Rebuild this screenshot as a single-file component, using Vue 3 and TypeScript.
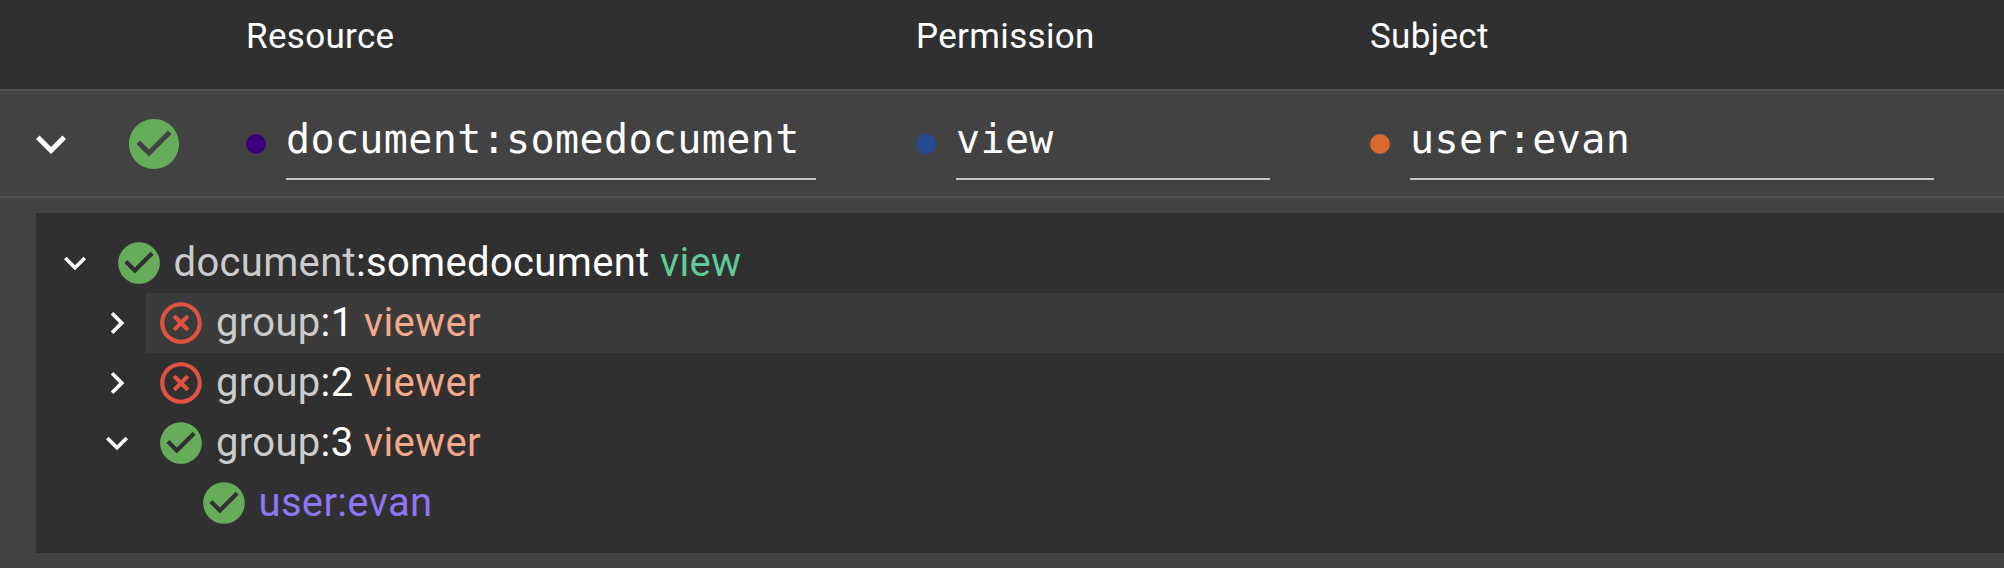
<script setup lang="ts">
import { defineComponent, h } from 'vue'

const paths = {
  check:
    'M12 2C6.48 2 2 6.48 2 12s4.48 10 10 10 10-4.48 10-10S17.52 2 12 2zm-2 15l-5-5 1.41-1.41L10 14.17l7.59-7.59L19 8l-9 9z',
  cross:
    'M14.59 8L12 10.59 9.41 8 8 9.41 10.59 12 8 14.59 9.41 16 12 13.41 14.59 16 16 14.59 13.41 12 16 9.41 14.59 8zM12 2C6.47 2 2 6.47 2 12s4.47 10 10 10 10-4.47 10-10S17.53 2 12 2zm0 18c-4.41 0-8-3.59-8-8s3.59-8 8-8 8 3.59 8 8-3.59 8-8 8z',
  down: 'M16.59 8.59L12 13.17 7.41 8.59 6 10l6 6 6-6z',
  right: 'M10 6L8.59 7.41 13.17 12l-4.58 4.59L10 18l6-6z',
}
type IconName = keyof typeof paths

const Icon = defineComponent({
  props: { name: { type: String, required: true } },
  setup: (props) => () =>
    h('svg', { viewBox: '0 0 24 24', fill: 'currentColor', 'aria-hidden': 'true' }, [
      h('path', { d: paths[props.name as IconName] }),
    ]),
})

interface Field {
  kind: string
  title: string
  value: string
}
const fields: Field[] = [
  { kind: 'resource', title: 'Resource', value: 'document:somedocument' },
  { kind: 'permission', title: 'Permission', value: 'view' },
  { kind: 'subject', title: 'Subject', value: 'user:evan' },
]

interface TreeRow {
  depth: number
  toggle?: IconName
  status: 'check' | 'cross'
  type?: string
  id?: string
  relation?: string
  relationKind?: 'permission' | 'relation'
  subject?: string
  active?: boolean
}
const rows: TreeRow[] = [
  { depth: 0, toggle: 'down', status: 'check', type: 'document', id: 'somedocument', relation: 'view', relationKind: 'permission' },
  { depth: 1, toggle: 'right', status: 'cross', type: 'group', id: '1', relation: 'viewer', relationKind: 'relation', active: true },
  { depth: 1, toggle: 'right', status: 'cross', type: 'group', id: '2', relation: 'viewer', relationKind: 'relation' },
  { depth: 1, toggle: 'down', status: 'check', type: 'group', id: '3', relation: 'viewer', relationKind: 'relation' },
  { depth: 2, status: 'check', subject: 'user:evan' },
]
</script>

<template>
  <main class="checks">
    <header class="grid head">
      <div v-for="f in fields" :key="f.kind" class="title" :class="`col-${f.kind}`">{{ f.title }}</div>
    </header>
    <section class="grid query">
      <Icon name="down" class="expand" />
      <Icon name="check" class="result" />
      <div v-for="f in fields" :key="f.kind" class="field" :class="`col-${f.kind}`">
        <span class="dot" :class="f.kind"></span>
        <span class="value">{{ f.value }}</span>
      </div>
    </section>
    <section class="trace">
      <div class="tree">
        <div v-for="(r, i) in rows" :key="i" class="node" :class="`depth-${r.depth}`">
          <span class="toggle"><Icon v-if="r.toggle" :name="r.toggle" /></span>
          <div class="label" :class="{ active: r.active }">
            <Icon :name="r.status" class="status" :class="r.status" />
            <span v-if="r.subject" class="user">{{ r.subject }}</span>
            <span v-else><span class="type">{{ r.type }}</span>:{{ r.id }} <span :class="r.relationKind">{{ r.relation }}</span></span>
          </div>
        </div>
      </div>
    </section>
  </main>
</template>

<style>
body {
  background: #424242;
}
</style>

<style scoped>
.checks {
  height: 568px;
  overflow: hidden;
  background: #424242;
  color: #fff;
  font-family: Roboto, sans-serif;
  letter-spacing: 0.33px;
}
.grid {
  display: grid;
  grid-template-columns: 103px 143px 570px 100px 354px 100px 564px;
  box-sizing: border-box;
  border-bottom: 2px solid #515151;
}
.col-resource {
  grid-column: 3;
}
.col-permission {
  grid-column: 5;
}
.col-subject {
  grid-column: 7;
}
.head {
  height: 91px;
  padding-top: 11px;
  background: #303030;
}
.title {
  font-size: 35px;
  line-height: 52px;
}
.query {
  height: 107px;
  align-items: center;
}
.expand,
.result {
  width: 60px;
  height: 60px;
}
.expand {
  margin-left: 21px;
}
.result {
  margin-left: 21px;
  color: #67ac5b;
}
.field {
  display: flex;
  align-items: center;
  gap: 20px;
}
.dot {
  width: 20px;
  height: 20px;
  border-radius: 50%;
}
.dot.resource {
  background: #39007a;
}
.dot.permission {
  background: #234c90;
}
.dot.subject {
  background: #d9682d;
}
.value {
  flex: 1;
  box-sizing: border-box;
  height: 73px;
  border-bottom: 2px solid #c6c6c6;
  font: 40px/64px 'DejaVu Sans Mono', monospace;
  letter-spacing: 0.375px;
}
.trace {
  padding: 15px 0 15px 36px;
}
.tree {
  padding: 20px 0 20px 20px;
  background: #303030;
}
.node {
  display: flex;
  height: 60px;
}
.depth-1 {
  margin-left: 42.5px;
}
.depth-2 {
  margin-left: 85px;
}
.toggle {
  display: flex;
  flex: none;
  align-items: center;
  justify-content: center;
  width: 37.5px;
  margin-right: 10px;
}
.toggle svg {
  flex: none;
  width: 44px;
  height: 44px;
}
.label {
  display: flex;
  flex: 1;
  align-items: center;
  padding-left: 10px;
  font-size: 40px;
  line-height: 60px;
  white-space: pre;
}
.active {
  background: #3b3b3b;
}
.status {
  width: 50px;
  height: 50px;
  margin-right: 10px;
}
.status.check {
  color: #67ac5b;
}
.status.cross {
  color: #e15241;
}
.type {
  color: #ccc;
}
.permission {
  color: #5fcb97;
}
.relation {
  color: #f4a98b;
}
.user {
  color: #8f76f6;
}
</style>
